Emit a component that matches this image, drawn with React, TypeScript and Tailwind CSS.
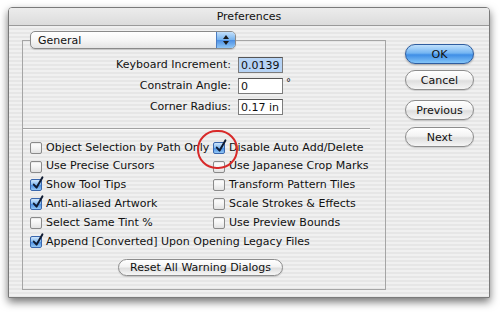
import React from "react";

const FONT = "[font-family:'DejaVu_Sans',sans-serif]";

function Box({ checked }: { checked?: boolean }) {
  if (checked) {
    return (
      <span className="relative block w-[12px] h-[12px] shrink-0 rounded-[2px] border border-[#3a67ad] bg-[linear-gradient(180deg,#cfe6fc_0%,#86bbf0_45%,#4f92e4_55%,#93c8f6_100%)]">
        <svg className="absolute left-[1px] top-[-4px]" width="12" height="14" viewBox="0 0 12 14">
          <path d="M1.8 8.6 L4.6 11.6 L10.4 1.4" stroke="#101c33" strokeWidth="2" fill="none" strokeLinecap="round" strokeLinejoin="round" />
        </svg>
      </span>
    );
  }
  return (
    <span className="block w-[12px] h-[12px] shrink-0 rounded-[2px] border border-[#8a8a8a] bg-[linear-gradient(180deg,#ffffff_0%,#f4f4f4_50%,#e2e2e2_100%)] shadow-[inset_0_1px_1px_rgba(0,0,0,0.08)]" />
  );
}

function CheckItem({ label, checked, w }: { label: string; checked?: boolean; w?: boolean }) {
  return (
    <div className={w ? "flex items-center gap-[4px] w-[183px]" : "flex items-center gap-[4px]"}>
      <Box checked={checked} />
      <span className="whitespace-nowrap">{label}</span>
    </div>
  );
}

function Field({ label, children }: { label: string; children: React.ReactNode }) {
  return (
    <div className="flex items-center h-[16px]">
      <span className="w-[208px] text-right whitespace-nowrap">{label}</span>
      {children}
    </div>
  );
}

export default function App() {
  return (
    <div className={`w-[500px] h-[312px] bg-white pt-[7px] pl-[8px] relative text-[11px] text-[#111] ${FONT}`}>
      <div className="w-[482px] h-[291px] flex flex-col border border-[#7a7a7a] rounded-t-[4px] shadow-[0_4px_8px_rgba(0,0,0,0.55)] overflow-hidden">
        <div className="h-[18px] shrink-0 flex items-center justify-center border-b border-[#9a9a9a] bg-[linear-gradient(180deg,#ececec_0%,#dcdcdc_100%)] text-[11px] leading-none">
          Preferences
        </div>
        <div className="flex-1 flex pl-[13px] pt-[5px] bg-[repeating-linear-gradient(180deg,#f0f0f0_0px,#f0f0f0_2px,#e6e6e6_2px,#e6e6e6_4px)]">
          <div className="w-[364px] flex flex-col">
            <div className="relative z-10 ml-[8px] w-[206px] h-[18px] flex items-center rounded-[5px] border border-[#8a8a8a] bg-[linear-gradient(180deg,#ffffff_0%,#f6f6f6_50%,#e4e4e4_100%)] shadow-[0_1px_1px_rgba(0,0,0,0.15)] overflow-hidden">
              <span className="flex-1 pl-[7px] leading-none">General</span>
              <span className="w-[19px] h-full flex flex-col items-center justify-center gap-[2px] border-l border-[#4a7cc2] bg-[linear-gradient(180deg,#c3e0fb_0%,#78b4ef_48%,#4d90e4_52%,#8fc6f6_100%)]">
                <svg width="6" height="4" viewBox="0 0 6 4"><path d="M0 4 L3 0 L6 4 Z" fill="#1a1a1a" /></svg>
                <svg width="6" height="4" viewBox="0 0 6 4"><path d="M0 0 L3 4 L6 0 Z" fill="#1a1a1a" /></svg>
              </span>
            </div>
            <div className="-mt-[9px] h-[250px] border border-[#a5a5a5] flex flex-col">
              <div className="mt-[16px] flex flex-col gap-[5px]">
                <Field label="Keyboard Increment:">
                  <span className="ml-[7px] w-[45px] h-[16px] flex items-center border border-[#7c7c7c] border-t-[#555] bg-[#b6d3f5] pl-[2px] leading-none">0.0139</span>
                </Field>
                <Field label="Constrain Angle:">
                  <span className="ml-[7px] w-[45px] h-[16px] flex items-center border border-[#7c7c7c] border-t-[#555] bg-white pl-[2px] leading-none">0</span>
                  <span className="ml-[3px] self-start -mt-[3px] text-[10px]">°</span>
                </Field>
                <Field label="Corner Radius:">
                  <span className="ml-[7px] w-[45px] h-[16px] flex items-center border border-[#7c7c7c] border-t-[#555] bg-white pl-[2px] leading-none whitespace-nowrap">0.17 in</span>
                </Field>
              </div>
              <div className="mt-[13px] w-[347px] h-[1px] bg-[#a2a2a2] shadow-[0_1px_0_#fafafa]" />
              <div className="mt-[9.5px] pl-[7px] flex flex-col">
                <div className="h-[18.8px] flex items-center">
                  <CheckItem w label="Object Selection by Path Only" />
                  <CheckItem checked label="Disable Auto Add/Delete" />
                </div>
                <div className="h-[18.8px] flex items-center">
                  <CheckItem w label="Use Precise Cursors" />
                  <CheckItem label="Use Japanese Crop Marks" />
                </div>
                <div className="h-[18.8px] flex items-center">
                  <CheckItem w checked label="Show Tool Tips" />
                  <CheckItem label="Transform Pattern Tiles" />
                </div>
                <div className="h-[18.8px] flex items-center">
                  <CheckItem w checked label="Anti-aliased Artwork" />
                  <CheckItem label="Scale Strokes & Effects" />
                </div>
                <div className="h-[18.8px] flex items-center">
                  <CheckItem w label="Select Same Tint %" />
                  <CheckItem label="Use Preview Bounds" />
                </div>
                <div className="h-[18.8px] flex items-center">
                  <CheckItem checked label="Append [Converted] Upon Opening Legacy Files" />
                </div>
              </div>
              <div className="mt-[7.5px] ml-[95px] w-[165px] h-[17px] flex items-center justify-center rounded-full border border-[#8d8d8d] bg-[linear-gradient(180deg,#ffffff_0%,#f3f3f3_45%,#dedede_55%,#f6f6f6_100%)] shadow-[0_1px_1px_rgba(0,0,0,0.15)] leading-none">
                Reset All Warning Dialogs
              </div>
            </div>
          </div>
          <div className="ml-[19px] mt-[13px] flex flex-col">
            <div className="w-[69px] h-[20px] flex items-center justify-center rounded-full border border-[#2f5d9f] bg-[linear-gradient(180deg,#bfe0fc_0%,#74b5f2_45%,#3f8ee6_55%,#84c5f8_100%)] shadow-[0_1px_2px_rgba(0,0,0,0.3)] leading-none">
              OK
            </div>
            <div className="mt-[6px] w-[69px] h-[20px] flex items-center justify-center rounded-full border border-[#8d8d8d] bg-[linear-gradient(180deg,#ffffff_0%,#f3f3f3_45%,#dedede_55%,#f6f6f6_100%)] shadow-[0_1px_1px_rgba(0,0,0,0.15)] leading-none">
              Cancel
            </div>
            <div className="mt-[10px] w-[69px] h-[20px] flex items-center justify-center rounded-full border border-[#8d8d8d] bg-[linear-gradient(180deg,#ffffff_0%,#f3f3f3_45%,#dedede_55%,#f6f6f6_100%)] shadow-[0_1px_1px_rgba(0,0,0,0.15)] leading-none">
              Previous
            </div>
            <div className="mt-[7px] w-[69px] h-[20px] flex items-center justify-center rounded-full border border-[#8d8d8d] bg-[linear-gradient(180deg,#ffffff_0%,#f3f3f3_45%,#dedede_55%,#f6f6f6_100%)] shadow-[0_1px_1px_rgba(0,0,0,0.15)] leading-none">
              Next
            </div>
          </div>
        </div>
      </div>
      <div className="absolute left-[197px] top-[130px] w-[41px] h-[39px] rounded-full border-2 border-[#d82a2a]" />
    </div>
  );
}
